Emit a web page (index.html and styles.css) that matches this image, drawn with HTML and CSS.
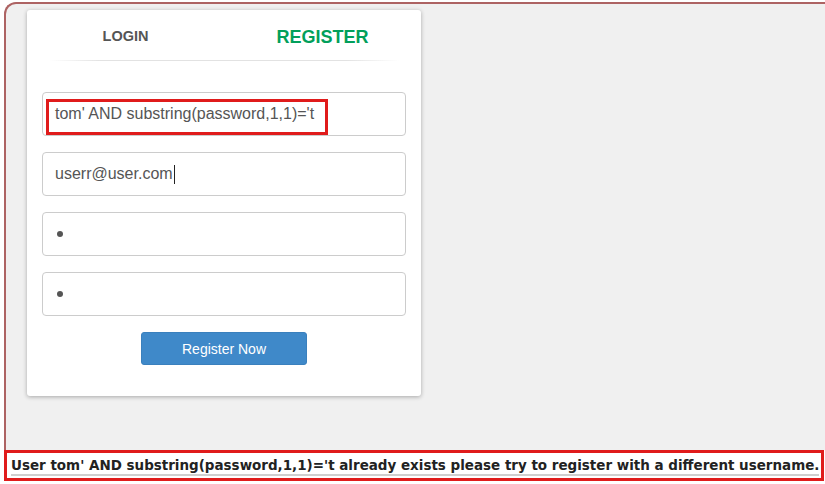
FILE: index.html
```html
<!DOCTYPE html>
<html lang="en">
<head>
    <meta charset="UTF-8">
    <meta name="viewport" content="width=device-width, initial-scale=1.0">
    <title>Register</title>
    <link rel="stylesheet" href="styles.css">
</head>
<body>
    <div class="frame">
        <div class="panel">
            <div class="tabs">
                <a href="#" class="tab">LOGIN</a>
                <a href="#" class="tab active">REGISTER</a>
            </div>
            <div class="divider"></div>

            <form class="form">
                <div class="field highlighted">
                    tom' AND substring(password,1,1)='t
                    <span class="mark"></span>
                </div>
                <div class="field">userr@user.com<span class="caret"></span></div>
                <div class="field secret"><span class="dot"></span></div>
                <div class="field secret"><span class="dot"></span></div>
                <button type="button" class="button">Register Now</button>
            </form>
        </div>
    </div>

    <div class="message">
        <span class="message-text">User tom' AND substring(password,1,1)='t already exists please try to register with a different username.</span>
    </div>
</body>
</html>
```

FILE: styles.css
```css
* {
    margin: 0;
    padding: 0;
    box-sizing: border-box;
}

body {
    font-family: "Liberation Sans", Arial, sans-serif;
    background: white;
    overflow: hidden;
}

.frame {
    margin: 2px 0 0 4px;
    height: 448px;
    border-top: 2px solid #ad6363;
    border-left: 2px solid #ad6363;
    border-top-left-radius: 12px;
    background: #f0f0f0;
    padding: 6px 0 0 21px;
}

.panel {
    width: 394px;
    background: white;
    border-radius: 3px;
    box-shadow: 0 1px 4px rgba(0,0,0,0.3);
    padding-bottom: 31px;
}

.tabs {
    display: flex;
    height: 50px;
    padding-top: 2px;
}

.tab {
    flex: 1;
    display: flex;
    align-items: center;
    justify-content: center;
    text-decoration: none;
    font-weight: bold;
    font-size: 14.5px;
    color: #555;
}

.tab.active {
    font-size: 18px;
    color: #029f5b;
    padding-top: 2px;
}

.divider {
    height: 1px;
    margin: 0 22px;
    background: linear-gradient(90deg, rgba(220,220,220,0) 0%, #e2e2e2 15%, #e2e2e2 85%, rgba(220,220,220,0) 100%);
}

.form {
    display: flex;
    flex-direction: column;
    gap: 16px;
    padding: 31px 15px 0 15px;
}

.field {
    position: relative;
    height: 44px;
    border: 1px solid #ccc;
    border-radius: 4px;
    padding: 0 12px;
    display: flex;
    align-items: center;
    font-size: 16px;
    color: #555;
    white-space: nowrap;
}

.field.secret {
    padding-left: 14px;
}

.dot {
    width: 6px;
    height: 6px;
    border-radius: 50%;
    background: #555;
}

.caret {
    display: inline-block;
    width: 1px;
    height: 19px;
    background: #222;
    margin-left: 1px;
}

.mark {
    position: absolute;
    left: 3px;
    top: 6px;
    width: 282px;
    height: 36px;
    border: 3px solid #e01b1b;
}

.button {
    align-self: center;
    width: 166px;
    height: 33px;
    background: #3f89c9;
    border: 1px solid #3a80bd;
    border-radius: 3px;
    color: white;
    font-family: "Liberation Sans", Arial, sans-serif;
    font-size: 14px;
    cursor: pointer;
}

.message {
    margin-left: 4px;
    width: 820px;
    height: 31px;
    border: 3px solid #e01b1b;
    background: white;
    padding: 3px 0 0 4px;
}

.message-text {
    font-family: "DejaVu Sans", sans-serif;
    font-weight: bold;
    font-size: 13.47px;
    color: #222;
    white-space: nowrap;
    border-bottom: 2px solid #cfcfcf;
    padding-bottom: 1px;
}
```
